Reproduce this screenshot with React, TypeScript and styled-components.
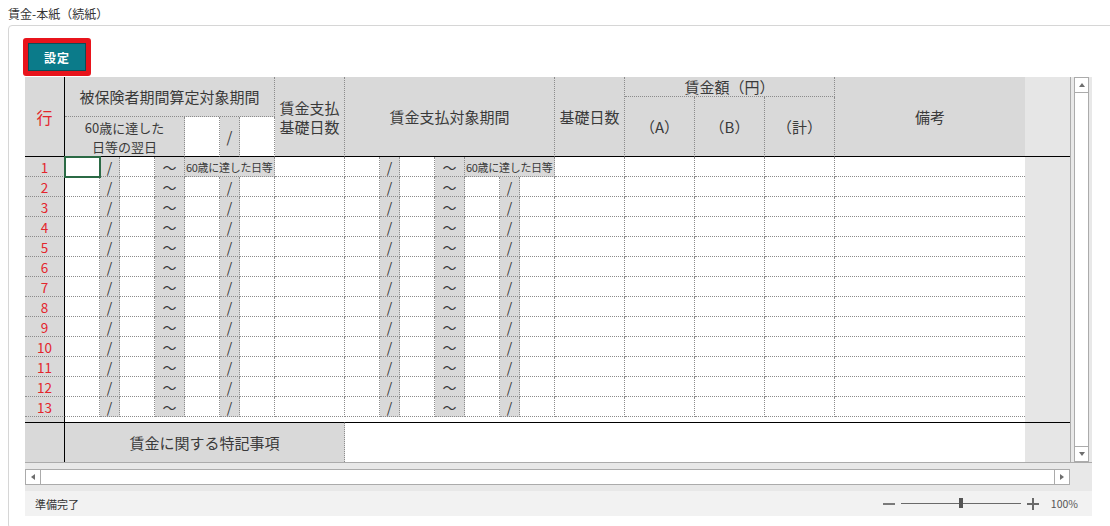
import { Fragment } from "react";
import styled, { createGlobalStyle } from "styled-components";

const GlobalStyle = createGlobalStyle`
  html, body {
    margin: 0;
    padding: 0;
    background: #fff;
    overflow: hidden;
  }
  body {
    font-family: "Noto Sans CJK JP", "Noto Sans", sans-serif;
    color: #333;
  }
`;

// row-number column first, spare gray column last
const columnWidths = [40, 35, 20, 35, 30, 35, 20, 35, 70, 35, 20, 35, 30, 35, 20, 35, 70, 70, 70, 70, 190, 45];
const ROW_COUNT = 13;
const DOT = "1px dotted #8c8c8c";

type Span = { $cols?: number; $rows?: number };

const spans = ({ $cols = 1, $rows = 1 }: Span) => `
  grid-column: span ${$cols};
  grid-row: span ${$rows};
`;

const Period = ({ first, selectable }: { first: boolean; selectable?: boolean }) => (
  <>
    <Entry $selected={first && selectable} />
    <Mark>/</Mark>
    <Entry />
    <Mark>～</Mark>
    {first ? (
      <Note $cols={3}>60歳に達した日等</Note>
    ) : (
      <>
        <Entry />
        <Mark>/</Mark>
        <Entry />
      </>
    )}
  </>
);

const ZoomSlider = () => (
  <ZoomControl>
    <svg width="12" height="12" viewBox="0 0 12 12">
      <rect x="0" y="5" width="12" height="2" fill="#7a7a7a" />
    </svg>
    <SliderTrack>
      <SliderThumb />
    </SliderTrack>
    <svg width="12" height="12" viewBox="0 0 12 12">
      <rect x="0" y="5" width="12" height="2" fill="#6a6a6a" />
      <rect x="5" y="0" width="2" height="12" fill="#6a6a6a" />
    </svg>
    <ZoomValue>100%</ZoomValue>
  </ZoomControl>
);

const App = () => {
  return (
    <Page>
      <GlobalStyle />
      <Title>賃金-本紙（続紙）</Title>
      <Card>
        <Highlight>
          <SetButton>設定</SetButton>
        </Highlight>
        <Workbook>
          <MainArea>
            <Viewport>
              <Grid>
                <RowNo $kind="head" $rows={4}>行</RowNo>
                <Head $cols={7} $rows={2} $split>被保険者期間算定対象期間</Head>
                <Head $rows={4}>
                  <Lines>
                    <span>賃金支払</span>
                    <span>基礎日数</span>
                  </Lines>
                </Head>
                <Head $cols={7} $rows={4}>賃金支払対象期間</Head>
                <Head $rows={4}>基礎日数</Head>
                <Head $cols={3} $split>賃金額（円）</Head>
                <Head $rows={4} $last>備考</Head>
                <Spare $rows={4} $edge="bottom" />
                <Head $rows={3}>（A）</Head>
                <Head $rows={3}>（B）</Head>
                <Head $rows={3}>（計）</Head>
                <Head $cols={4} $rows={2} $small>
                  <Lines>
                    <span>60歳に達した</span>
                    <span>日等の翌日</span>
                  </Lines>
                </Head>
                <Head $rows={2} $blank />
                <Head $rows={2}>/</Head>
                <Head $rows={2} $blank />

                {Array.from({ length: ROW_COUNT }, (_, i) => {
                  const first = i === 0;
                  return (
                    <Fragment key={i}>
                      <RowNo>{i + 1}</RowNo>
                      <Period first={first} selectable />
                      <Entry />
                      <Period first={first} />
                      <Entry />
                      <Entry />
                      <Entry />
                      <Entry />
                      <Entry $last />
                      {first && <Spare $rows={ROW_COUNT + 1} />}
                    </Fragment>
                  );
                })}

                <RowNo $kind="blank" />
                <Gap $cols={20} />

                <RowNo $kind="band" $rows={2} />
                <BandLabel $cols={8} $rows={2}>賃金に関する特記事項</BandLabel>
                <BandEntry $cols={12} $rows={2} />
                <Spare $rows={2} $edge="top" />
              </Grid>
            </Viewport>
            <VScroll>
              <Track $vertical>
                <ScrollButton $side="start" $vertical>
                  <Arrow $dir="up" />
                </ScrollButton>
                <ScrollButton $side="end" $vertical>
                  <Arrow $dir="down" />
                </ScrollButton>
              </Track>
            </VScroll>
          </MainArea>
          <HScroll>
            <Track>
              <ScrollButton $side="start">
                <Arrow $dir="left" />
              </ScrollButton>
              <ScrollButton $side="end">
                <Arrow $dir="right" />
              </ScrollButton>
            </Track>
          </HScroll>
          <StatusBar>
            <span>準備完了</span>
            <ZoomSlider />
          </StatusBar>
        </Workbook>
      </Card>
    </Page>
  );
};

const Page = styled.div`
  padding: 5px 0 0 8px;
`;

const Title = styled.div`
  font-size: 12px;
  line-height: 17px;
  margin-bottom: 3px;
  color: #333;
`;

const Card = styled.div`
  border: 1px solid #d6d6d6;
  border-radius: 4px;
  margin-right: -6px;
  padding: 12px 0 12px 14px;
  background: #fff;
`;

const Highlight = styled.div`
  display: inline-block;
  vertical-align: top;
  border: 5px solid #e8141c;
  border-radius: 3px;
`;

const SetButton = styled.button`
  display: block;
  width: 58px;
  height: 28px;
  margin: 0;
  padding: 0;
  border: 1px solid #0c4d57;
  background: #0b7b8a;
  color: #fff;
  font: bold 12px "Noto Sans CJK JP", sans-serif;
  letter-spacing: 1px;
`;

const Workbook = styled.div`
  margin: 1px 0 0 2px;
  width: 1067px;
  background: #e8e8e8;
`;

const MainArea = styled.div`
  display: flex;
  border-bottom: 1px solid #ababab;
`;

const Viewport = styled.div`
  width: 1045px;
  border-right: 1px solid #ababab;
  background: #e6e6e6;
`;

const Grid = styled.div`
  display: grid;
  grid-template-columns: ${columnWidths.map((w) => `${w}px`).join(" ")};
  grid-template-rows: repeat(${ROW_COUNT + 4}, 20px) 5px 20px 20px;
`;

const CellBase = styled.div<Span>`
  ${spans}
  box-sizing: border-box;
  display: flex;
  align-items: center;
  justify-content: center;
  text-align: center;
  min-width: 0;
  overflow: hidden;
  white-space: nowrap;
`;

const Lines = styled.div`
  display: flex;
  flex-direction: column;
  align-items: center;
`;

const Head = styled(CellBase)<{ $split?: boolean; $last?: boolean; $blank?: boolean; $small?: boolean }>`
  background: ${(p) => (p.$blank ? "#fff" : "#d9d9d9")};
  border-right: ${(p) => (p.$last ? "0" : DOT)};
  border-bottom: ${(p) => (p.$split ? DOT : "1px solid #000")};
  font-size: ${(p) => (p.$small ? "13px" : "15px")};
  line-height: 19px;
  color: #3a3a3a;
`;

const RowNo = styled(CellBase)<{ $kind?: "head" | "row" | "blank" | "band" }>`
  background: #d9d9d9;
  border-right: 1px solid #000;
  border-bottom: ${(p) =>
    p.$kind === "head" ? "1px solid #000" : p.$kind === "blank" || p.$kind === "band" ? "0" : DOT};
  border-top: ${(p) => (p.$kind === "band" ? "1px solid #000" : "0")};
  color: #e3262d;
  font-size: ${(p) => (p.$kind === "head" ? "16px" : "13.5px")};
  line-height: 18px;
`;

const Entry = styled(CellBase)<{ $selected?: boolean; $last?: boolean }>`
  position: relative;
  background: #fff;
  border-right: ${(p) => (p.$last ? "0" : DOT)};
  border-bottom: ${DOT};
  outline: ${(p) => (p.$selected ? "2px solid #2b6a45" : "none")};
  outline-offset: -1px;
  z-index: ${(p) => (p.$selected ? 1 : 0)};
`;

const Mark = styled(CellBase)`
  background: #d9d9d9;
  border-right: ${DOT};
  border-bottom: ${DOT};
  font-size: 14px;
  line-height: 18px;
  color: #3a3a3a;
`;

const Note = styled(Mark)`
  font-size: 11px;
  letter-spacing: -0.3px;
  justify-content: flex-start;
  padding-left: 1px;
`;

const Spare = styled(CellBase)<{ $edge?: "top" | "bottom" }>`
  background: #e6e6e6;
  border-top: ${(p) => (p.$edge === "top" ? "1px solid #000" : "0")};
  border-bottom: ${(p) => (p.$edge === "bottom" ? "1px solid #000" : "0")};
`;

const Gap = styled(CellBase)`
  background: #fff;
`;

const BandLabel = styled(CellBase)`
  background: #d9d9d9;
  border-top: 1px solid #000;
  border-right: ${DOT};
  font-size: 15px;
  color: #3a3a3a;
`;

const BandEntry = styled(CellBase)`
  background: #fff;
  border-top: 1px solid #000;
`;

const VScroll = styled.div`
  width: 21px;
  box-sizing: border-box;
  padding: 0 3px;
  display: flex;
`;

const HScroll = styled.div`
  height: 28px;
  box-sizing: border-box;
  padding: 6px 22px 6px 0;
  display: flex;
`;

const Track = styled.div<{ $vertical?: boolean }>`
  flex: 1;
  display: flex;
  flex-direction: ${(p) => (p.$vertical ? "column" : "row")};
  justify-content: space-between;
  background: #fff;
  border: 1px solid #ababab;
`;

const ScrollButton = styled.div<{ $side: "start" | "end"; $vertical?: boolean }>`
  display: flex;
  align-items: center;
  justify-content: center;
  width: ${(p) => (p.$vertical ? "auto" : "14px")};
  height: ${(p) => (p.$vertical ? "14px" : "auto")};
  background: #fff;
  ${(p) => {
    const edge = p.$vertical
      ? p.$side === "start" ? "bottom" : "top"
      : p.$side === "start" ? "right" : "left";
    return `border-${edge}: 1px solid #ababab;`;
  }}
`;

const Arrow = styled.span<{ $dir: "up" | "down" | "left" | "right" }>`
  width: 0;
  height: 0;
  ${(p) => {
    switch (p.$dir) {
      case "up":
        return "border-left: 3.5px solid transparent; border-right: 3.5px solid transparent; border-bottom: 4px solid #6e6e6e;";
      case "down":
        return "border-left: 3.5px solid transparent; border-right: 3.5px solid transparent; border-top: 4px solid #6e6e6e;";
      case "left":
        return "border-top: 3.5px solid transparent; border-bottom: 3.5px solid transparent; border-right: 4px solid #6e6e6e;";
      default:
        return "border-top: 3.5px solid transparent; border-bottom: 3.5px solid transparent; border-left: 4px solid #6e6e6e;";
    }
  }}
`;

const StatusBar = styled.div`
  height: 25px;
  box-sizing: border-box;
  display: flex;
  align-items: center;
  justify-content: space-between;
  padding: 0 14px 0 10px;
  background: #f2f2f2;
  font-size: 11px;
  color: #333;
`;

const ZoomControl = styled.div`
  display: flex;
  align-items: center;
  gap: 6px;
`;

const SliderTrack = styled.div`
  position: relative;
  width: 120px;
  height: 1px;
  background: #6a6a6a;
`;

const SliderThumb = styled.div`
  position: absolute;
  left: 58px;
  top: -5px;
  width: 4px;
  height: 10px;
  background: #555;
`;

const ZoomValue = styled.span`
  margin-left: 6px;
  font-size: 10.5px;
  color: #555;
`;

export default App;
